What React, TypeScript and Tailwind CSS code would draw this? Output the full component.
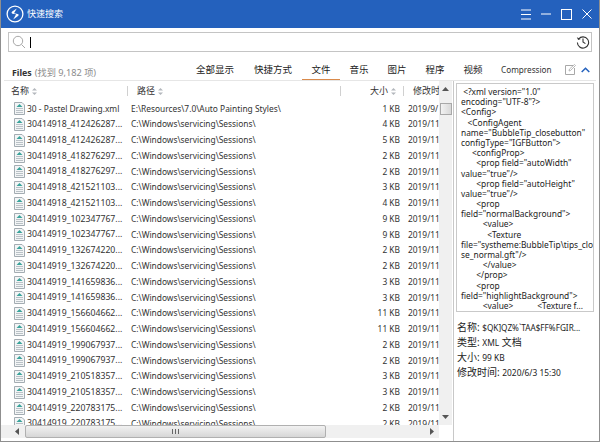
import React from 'react';

const FONT = "font-['Noto_Sans','Noto_Sans_CJK_SC',sans-serif]";

const rows = [
  ['30 - Pastel Drawing.xml', 'E:\\Resources\\7.0\\Auto Painting Styles\\', '1 KB', '2019/9/'],
  ['30414918_412426287...', '', '4 KB', ''],
  ['30414918_412426287...', '', '5 KB', ''],
  ['30414918_418276297...', '', '2 KB', ''],
  ['30414918_418276297...', '', '2 KB', ''],
  ['30414918_421521103...', '', '3 KB', ''],
  ['30414918_421521103...', '', '4 KB', ''],
  ['30414919_102347767...', '', '9 KB', ''],
  ['30414919_102347767...', '', '9 KB', ''],
  ['30414919_132674220...', '', '2 KB', ''],
  ['30414919_132674220...', '', '2 KB', ''],
  ['30414919_141659836...', '', '3 KB', ''],
  ['30414919_141659836...', '', '3 KB', ''],
  ['30414919_156604662...', '', '11 KB', ''],
  ['30414919_156604662...', '', '11 KB', ''],
  ['30414919_199067937...', '', '2 KB', ''],
  ['30414919_199067937...', '', '2 KB', ''],
  ['30414919_210518357...', '', '3 KB', ''],
  ['30414919_210518357...', '', '3 KB', ''],
  ['30414919_220783175...', '', '2 KB', ''],
  ['30414919_220783175...', '', '2 KB', ''],
];

const preview = [
  ' <?xml version="1.0"',
  'encoding="UTF-8"?>',
  '<Config>',
  '   <ConfigAgent',
  'name="BubbleTip_closebutton"',
  'configType="IGFButton">',
  '     <configProp>',
  '       <prop field="autoWidth"',
  'value="true"/>',
  '       <prop field="autoHeight"',
  'value="true"/>',
  '       <prop',
  'field="normalBackground">',
  '          <value>',
  '            <Texture',
  'file="systheme:BubbleTip\\tips_clo',
  'se_normal.gft"/>',
  '          </value>',
  '       </prop>',
  '       <prop',
  'field="highlightBackground">',
  '          <value>           <Texture f...',
];

const tabs = ['全部显示', '快捷方式', '文件', '音乐', '图片', '程序', '视频'];

const SortArrows = () => (
  <svg width="5" height="7" viewBox="0 0 5 7" className="ml-[3px] shrink-0">
    <path d="M2.5 0 5 2.6H0zM2.5 7 0 4.4h5z" fill="#b4b8bd" />
  </svg>
);

const XmlIcon = () => (
  <svg width="13" height="13" viewBox="0 0 13 13" className="shrink-0">
    <path d="M1.5.5h7.5l2.5 2.5v9.5h-10z" fill="#f3f5f6" stroke="#a3acb2" />
    <path d="M6.5 2 9.5 5h-6z" fill="#3aa39b" />
    <path d="M3 6.5h7M3 8.5h7M3 10.5h7" stroke="#b9c1c6" />
  </svg>
);

export default function App() {
  return (
    <div className={`${FONT} w-[600px] h-[442px] bg-white flex flex-col overflow-hidden border-x border-b border-[#8f8f8f] text-[#222]`}>
      {/* title bar */}
      <div className="h-[28px] -mx-px shrink-0 bg-[#2461bd] flex items-center text-white">
        <svg width="18" height="18" viewBox="0 0 18 18" className="ml-[6px]">
          <circle cx="9" cy="9" r="7.9" fill="none" stroke="#fff" strokeWidth="1.3" />
          <path d="M10.8 3.4 6.2 6.6c-1 .8-.8 1.9.3 2.1l3.6.5-2.9 5.4 4.8-3.6c1-.9.8-1.9-.4-2.1L8 8.3z" fill="#fff" />
        </svg>
        <span className="ml-[3px] text-[9px]">快速搜索</span>
        <div className="ml-auto flex items-center mr-[8px] gap-[10px]">
          <svg width="10" height="11" viewBox="0 0 10 11"><path d="M0 1h10M0 5.5h10M0 10h10" stroke="#fff" strokeWidth="1" /></svg>
          <svg width="10" height="10" viewBox="0 0 10 10"><path d="M0 5h10" stroke="#fff" strokeWidth="1" /></svg>
          <svg width="11" height="11" viewBox="0 0 11 11"><rect x=".5" y=".5" width="10" height="10" fill="none" stroke="#fff" /></svg>
          <svg width="10" height="10" viewBox="0 0 10 10"><path d="M.5.5l9 9M9.5.5l-9 9" stroke="#fff" strokeWidth="1" /></svg>
        </div>
      </div>

      {/* search box */}
      <div className="mx-[7px] mt-[4px] h-[20px] shrink-0 border border-[#c4c4c4] flex items-center">
        <svg width="14" height="14" viewBox="0 0 14 14" className="ml-[3px]">
          <circle cx="6" cy="6" r="4.7" fill="none" stroke="#a8a8a8" />
          <path d="m9.5 9.5 3.5 3.5" stroke="#a8a8a8" />
        </svg>
        <span className="ml-[4px] w-px h-[11px] bg-black" />
        <svg width="14" height="14" viewBox="0 0 14 14" className="ml-auto mr-[1px]">
          <path d="M2.6 4A5.6 5.6 0 1 1 1.4 7.5" fill="none" stroke="#333" strokeWidth="1.1" />
          <path d="M.8 2.2 2.2 5l2.6-1.1z" fill="#333" />
          <path d="M7 3.6V7l2.4 1.6" fill="none" stroke="#333" strokeWidth="1.1" />
        </svg>
      </div>

      {/* tabs row */}
      <div className="h-[28px] shrink-0 flex pl-[11px] pr-[9px]">
        <div className="pt-[10px] leading-[16px] whitespace-nowrap">
          <span className="font-bold text-[8.8px] text-[#333]">Files</span>
          <span className="ml-[3px] text-[9.2px] text-[#8c8c8c]">(找到 9,182 项)</span>
        </div>
        <div className="ml-auto flex h-full">
          {tabs.map((t, i) => (
            <div
              key={t}
              className={`h-full pt-[10px] text-center text-[9.5px] leading-[16px] ${i < 2 ? 'w-[58px]' : 'w-[38px]'} ${t === '文件' ? 'border-b border-[#d98a4b]' : ''}`}
            >
              {t}
            </div>
          ))}
          <div className="ml-[9px] pt-[10px] text-[8.2px] leading-[16px] text-[#333] w-[48px] whitespace-nowrap">Compression</div>
          <svg width="11" height="11" viewBox="0 0 11 11" className="ml-[16px] mt-[12px]">
            <path d="M8 1.5H.5v9h9V4" fill="none" stroke="#a8a8a8" />
            <path d="M4 7l.5-2L9.5.5l1 1L5.5 6.5z" fill="#fff" stroke="#a8a8a8" strokeWidth=".8" />
          </svg>
          <svg width="9" height="6" viewBox="0 0 9 6" className="ml-[5px] mt-[15px]">
            <path d="M.7 5 4.5 1.2 8.3 5" fill="none" stroke="#2461bd" strokeWidth="1.5" />
          </svg>
        </div>
      </div>

      <div className="mx-[3px] h-px shrink-0 bg-[#e6e6e6]" />

      <div className="flex-1 min-h-0 flex">
        {/* file list */}
        <div className="w-[452px] shrink-0 flex flex-col min-h-0 pb-[3px]">
          <div className="flex flex-1 min-h-0">
            <div className="w-[438px] flex flex-col min-h-0">
              <div className="h-[20px] shrink-0 flex items-center text-[9px] text-[#333]">
                <div className="w-[127px] pl-[10px] flex items-center border-r border-[#d0d0d0] h-[10px]">名称<SortArrows /></div>
                <div className="w-[212px] pl-[9px] flex items-center">路径<SortArrows /></div>
                <div className="w-[64px] flex items-center justify-end border-x border-[#d0d0d0] h-[10px] pr-[7px]">大小<SortArrows /></div>
                <div className="pl-[9px] whitespace-nowrap overflow-hidden w-[35px]">修改时</div>
              </div>
              <div className="flex-1 min-h-0 overflow-hidden">
                {rows.map((r, i) => (
                  <div key={i} className="h-[15.75px] flex items-center text-[8.4px] text-[#333]">
                    <div className={`w-[130px] pl-[12px] flex items-center gap-[1px] whitespace-nowrap ${i > 0 ? 'text-[8.7px]' : ''}`}><XmlIcon />{r[0]}</div>
                    <div className="w-[210px] whitespace-nowrap">{r[1] || 'C:\\Windows\\servicing\\Sessions\\'}</div>
                    <div className="w-[59px] text-right whitespace-nowrap">{r[2]}</div>
                    <div className="w-[39px] pl-[8px] whitespace-nowrap overflow-hidden">{r[3] || '2019/11'}</div>
                  </div>
                ))}
              </div>
            </div>
            {/* vertical scrollbar */}
            <div className="w-[13px] flex flex-col items-center bg-[#f0f0f0]">
              <svg width="7" height="4" viewBox="0 0 7 4" className="mt-[6px]"><path d="M3.5 0 7 4H0z" fill="#555" /></svg>
              <div className="mt-[12px] w-[12px] h-[12px] bg-gradient-to-r from-[#f2f2f2] to-[#d8d8d8] border border-[#a8a8a8]" />
              <svg width="7" height="4" viewBox="0 0 7 4" className="mt-auto mb-[6px]"><path d="M0 0h7L3.5 4z" fill="#555" /></svg>
            </div>
          </div>
          {/* horizontal scrollbar */}
          <div className="h-[13px] w-[438px] shrink-0 flex items-center bg-[#f0f0f0]">
            <svg width="4" height="7" viewBox="0 0 4 7" className="ml-[14px] shrink-0"><path d="M4 0v7L0 3.5z" fill="#555" /></svg>
            <div className="ml-[6px] w-[301px] h-[13px] bg-gradient-to-b from-[#f2f2f2] to-[#d6d6d6] border border-[#b0b0b0] rounded-[2px] flex items-center justify-center">
              <svg width="7" height="5" viewBox="0 0 7 5"><path d="M.5 0v5M3.5 0v5M6.5 0v5" stroke="#666" /></svg>
            </div>
            <svg width="4" height="7" viewBox="0 0 4 7" className="ml-[104px] shrink-0"><path d="M0 0v7l4-3.5z" fill="#555" /></svg>
          </div>
        </div>

        <div className="w-px bg-[#c8c8c8]" />

        {/* preview panel */}
        <div className="flex-1 min-w-0 pl-[2px] pt-[2px] pr-[5px]">
          <div className="h-[229px] border border-[#c9c9c9] pl-[4px] pt-[3px] overflow-hidden text-[8.4px] leading-[10.2px] text-[#222]">
            {preview.map((l, i) => (
              <div key={i} className="whitespace-pre h-[10.2px]">{l}</div>
            ))}
          </div>
          <div className="mt-[8px] pl-[1px] text-[10px] leading-[14px] text-[#222] whitespace-nowrap">
            <div>名称: <span className="text-[8.2px]">$QK]QZ%`TAA$FF%FGIR...</span></div>
            <div>类型: <span className="text-[8.4px]">XML</span> 文档</div>
            <div>大小: <span className="text-[8.4px]">99 KB</span></div>
            <div>修改时间: <span className="text-[8.4px]">2020/6/3 15:30</span></div>
          </div>
        </div>
      </div>
    </div>
  );
}
